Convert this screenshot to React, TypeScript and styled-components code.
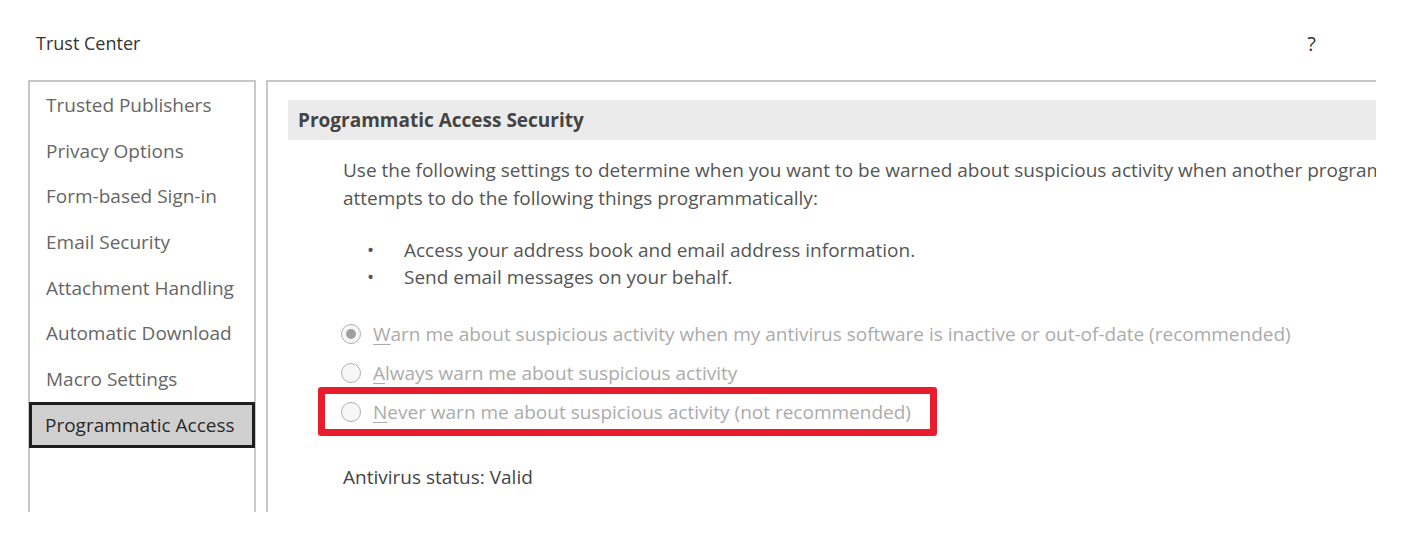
import * as React from 'react';
import styled, { createGlobalStyle } from 'styled-components';

const GlobalStyle = createGlobalStyle`
  html, body {
    margin: 0;
    padding: 0;
    background: #ffffff;
  }
  body {
    font-family: "Open Sans", "Noto Sans", "DejaVu Sans", sans-serif;
  }
`;

const Page = styled.div`
  width: 1420px;
  height: 552px;
  overflow: hidden;
  background: #fff;
`;

const TitleBar = styled.div`
  display: flex;
  justify-content: space-between;
  align-items: center;
  height: 34px;
  padding: 26px 104px 0 36px;
`;

const Title = styled.div`
  font-size: 18px;
  color: #333;
`;

const Help = styled.div`
  font-size: 20px;
  color: #333;
`;

const Main = styled.div`
  display: flex;
  gap: 10px;
  margin-top: 20px;
  padding-left: 28px;
  height: 432px;
  overflow: hidden;
`;

const Sidebar = styled.div`
  box-sizing: border-box;
  width: 228px;
  flex: none;
  border: 2px solid #c8c8c8;
  border-bottom: none;
  display: flex;
  flex-direction: column;
`;

const NavItem = styled.div<{ $active?: boolean }>`
  box-sizing: border-box;
  height: 45.7px;
  display: flex;
  align-items: center;
  font-size: 19px;
  white-space: nowrap;
  color: ${p => (p.$active ? '#2a2a2a' : '#666')};
  padding-left: ${p => (p.$active ? '13px' : '16px')};
  background: ${p => (p.$active ? '#d0d0d0' : 'transparent')};
  border: ${p => (p.$active ? '3px solid #1e1e1e' : 'none')};
  margin: ${p => (p.$active ? '0 -1px' : '0')};
`;

const Content = styled.div`
  box-sizing: border-box;
  width: 1110px;
  flex: none;
  border-top: 2px solid #c8c8c8;
  border-left: 2px solid #c8c8c8;
  padding: 18px 0 0 20px;
  overflow: hidden;
`;

const SectionHeader = styled.div`
  height: 40px;
  background: #ebebeb;
  display: flex;
  align-items: center;
  padding-left: 10px;
  font-size: 19px;
  font-weight: 700;
  color: #444;
  white-space: nowrap;
`;

const Body = styled.div`
  padding-left: 55px;
`;

const Paragraph = styled.p`
  margin: 16px 0 0;
  font-size: 19px;
  line-height: 28px;
  color: #555;
  white-space: nowrap;
`;

const List = styled.ul`
  list-style: none;
  margin: 25px 0 0;
  padding: 0;
`;

const ListItem = styled.li`
  display: flex;
  font-size: 19px;
  line-height: 27px;
  color: #555;
  white-space: nowrap;
`;

const Bullet = styled.span`
  width: 61px;
  padding-left: 24px;
  box-sizing: border-box;
  flex: none;
`;

const Options = styled.div`
  margin-top: 23px;
  display: flex;
  flex-direction: column;
`;

const OptionRow = styled.label<{ $highlight?: boolean }>`
  box-sizing: border-box;
  display: flex;
  align-items: center;
  height: ${p => (p.$highlight ? '49px' : '39px')};
  font-size: 19px;
  color: #ababab;
  white-space: nowrap;
  ${p =>
    p.$highlight
      ? `
    width: 619px;
    margin: -5px 0 -5px -25px;
    padding-left: 16px;
    border: 7px solid #e81c2c;
    border-radius: 3px;
  `
      : `
    margin-left: -2px;
  `}

  u {
    text-decoration: underline;
    text-underline-offset: 3px;
    text-decoration-thickness: 1px;
  }
`;

const Radio = styled.span<{ $checked?: boolean }>`
  box-sizing: border-box;
  width: 20px;
  height: 20px;
  flex: none;
  margin-right: 12px;
  border-radius: 50%;
  border: 1.5px solid #b0b0b0;
  background: #f7f7f7;
  display: flex;
  align-items: center;
  justify-content: center;

  &::after {
    content: '';
    display: ${p => (p.$checked ? 'block' : 'none')};
    width: 10px;
    height: 10px;
    border-radius: 50%;
    background: #a0a0a0;
  }
`;

const Status = styled.div`
  margin-top: 32px;
  font-size: 19px;
  line-height: 28px;
  color: #444;
`;

const navItems = [
  'Trusted Publishers',
  'Privacy Options',
  'Form-based Sign-in',
  'Email Security',
  'Attachment Handling',
  'Automatic Download',
  'Macro Settings',
  'Programmatic Access',
];

const options = [
  { key: 'W', rest: 'arn me about suspicious activity when my antivirus software is inactive or out-of-date (recommended)', checked: true },
  { key: 'A', rest: 'lways warn me about suspicious activity' },
  { key: 'N', rest: 'ever warn me about suspicious activity (not recommended)', highlight: true },
];

export default function App() {
  return (
    <Page>
      <GlobalStyle />
      <TitleBar>
        <Title>Trust Center</Title>
        <Help>?</Help>
      </TitleBar>
      <Main>
        <Sidebar>
          {navItems.map(item => (
            <NavItem key={item} $active={item === 'Programmatic Access'}>
              {item}
            </NavItem>
          ))}
        </Sidebar>
        <Content>
          <SectionHeader>Programmatic Access Security</SectionHeader>
          <Body>
            <Paragraph>
              Use the following settings to determine when you want to be warned about suspicious activity when another program
              <br />
              attempts to do the following things programmatically:
            </Paragraph>
            <List>
              <ListItem>
                <Bullet>•</Bullet>Access your address book and email address information.
              </ListItem>
              <ListItem>
                <Bullet>•</Bullet>Send email messages on your behalf.
              </ListItem>
            </List>
            <Options>
              {options.map(o => (
                <OptionRow key={o.key} $highlight={o.highlight}>
                  <Radio $checked={o.checked} />
                  <span>
                    <u>{o.key}</u>
                    {o.rest}
                  </span>
                </OptionRow>
              ))}
            </Options>
            <Status>Antivirus status: Valid</Status>
          </Body>
        </Content>
      </Main>
    </Page>
  );
}
